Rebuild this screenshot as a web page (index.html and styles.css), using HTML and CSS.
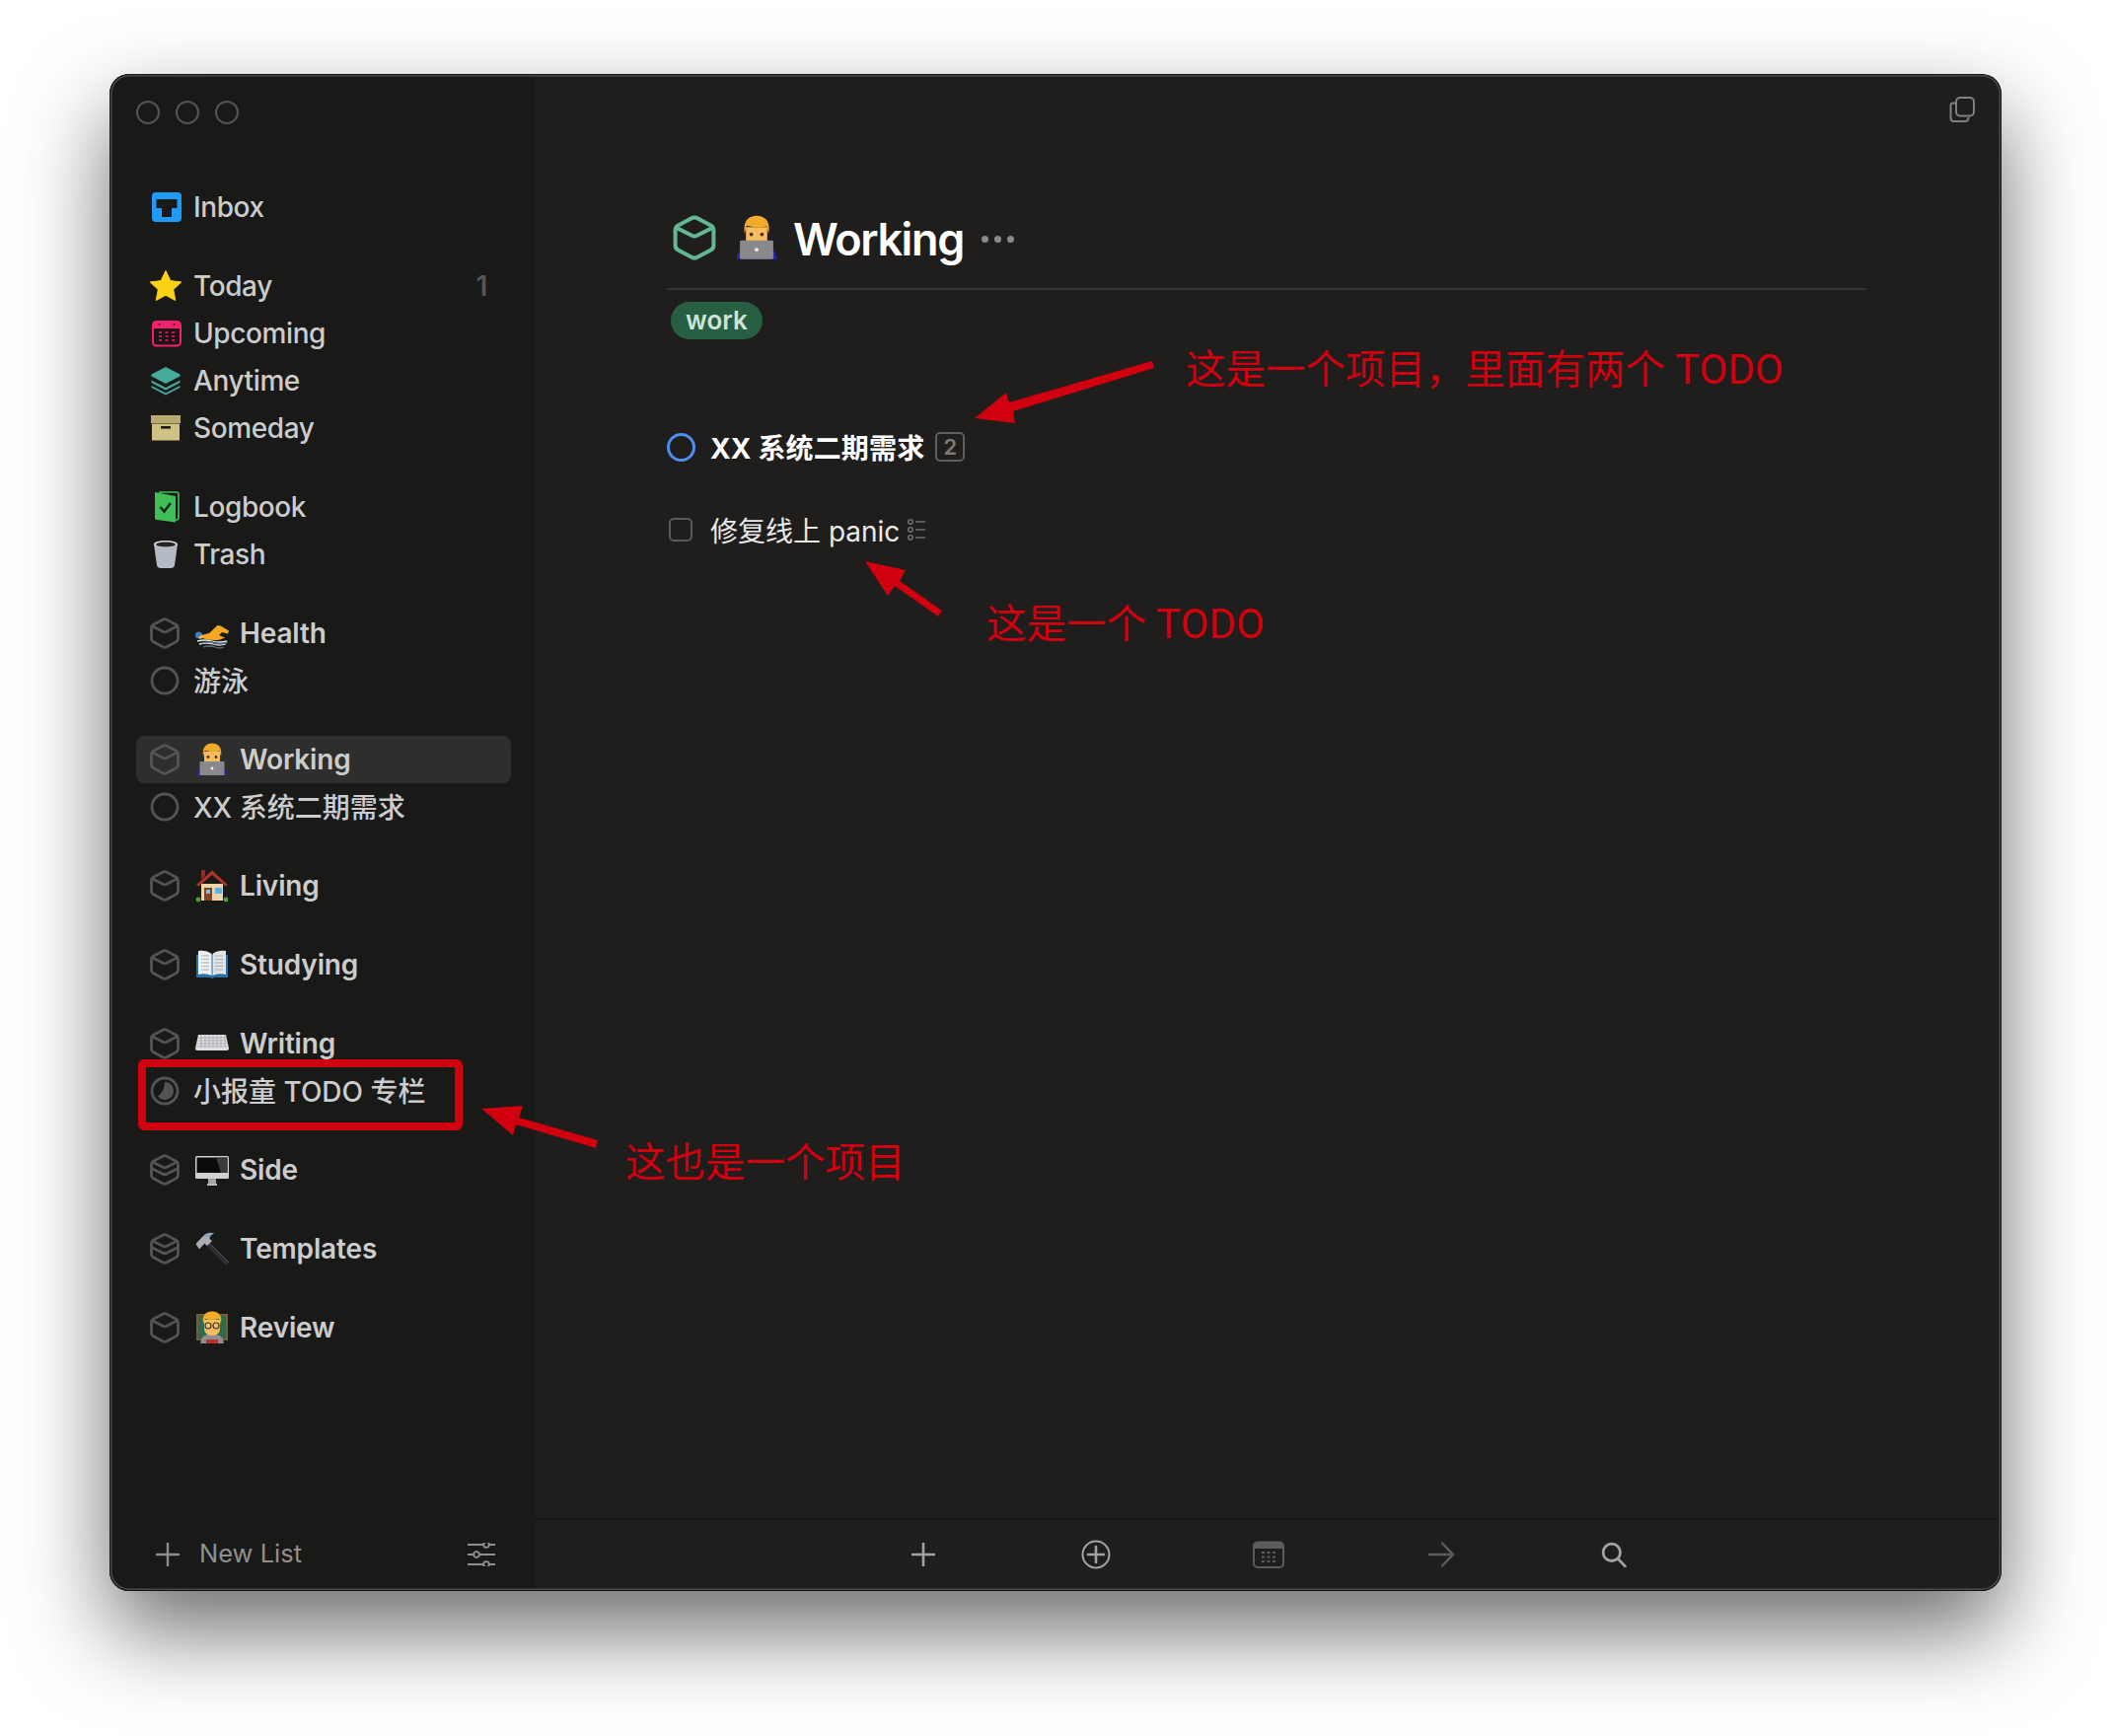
FILE: index.html
```html
<!DOCTYPE html>
<html lang="zh-CN">
<head>
    <meta charset="UTF-8">
    <title>Working</title>
    <link rel="stylesheet" href="styles.css">
</head>
<body>
    <!-- shared icons -->
    <svg class="sprites" aria-hidden="true">
        <defs>
            <symbol id="box" viewBox="0 0 30 32">
                <path d="M13 2.2 Q15 1.2 17 2.2 L26.5 7.3 Q28.5 8.4 28.5 10.5 V21.5 Q28.5 23.6 26.5 24.7 L17 29.8 Q15 30.8 13 29.8 L3.5 24.7 Q1.5 23.6 1.5 21.5 V10.5 Q1.5 8.4 3.5 7.3 Z M2.5 9 L13.5 14.6 Q15 15.3 16.5 14.6 L27.5 9" fill="none" stroke="currentColor" stroke-width="2.8"/>
            </symbol>
            <symbol id="box-stack" viewBox="0 0 30 32">
                <path d="M13 2.2 Q15 1.2 17 2.2 L26.5 7.3 Q28.5 8.4 28.5 10.5 V21.5 Q28.5 23.6 26.5 24.7 L17 29.8 Q15 30.8 13 29.8 L3.5 24.7 Q1.5 23.6 1.5 21.5 V10.5 Q1.5 8.4 3.5 7.3 Z M2.5 8 L13.5 13.4 Q15 14.1 16.5 13.4 L27.5 8 M2.5 15 L13.5 20.4 Q15 21.1 16.5 20.4 L27.5 15" fill="none" stroke="currentColor" stroke-width="2.8"/>
            </symbol>
            <symbol id="emoji-dev" viewBox="0 0 34 34">
                <path d="M2 33 Q3 25 9 23 H25 Q31 25 32 33 Z" fill="#2426b4"/>
                <path d="M9 9 H25 V19 Q25 25 17 25 Q9 25 9 19 Z" fill="#f8bd5e"/>
                <path d="M8 14 Q6 1 17 0.5 Q28 1 26 14 L24.5 8.5 Q17 10 9.5 8 Z" fill="#f2ab2a"/>
                <circle cx="13" cy="14.5" r="1.4" fill="#4a2f1b"/>
                <circle cx="21" cy="14.5" r="1.4" fill="#4a2f1b"/>
                <rect x="4.5" y="19" width="25" height="14" rx="1" fill="#88898d"/>
                <circle cx="17" cy="26" r="1.4" fill="#f2f2f2"/>
            </symbol>
            <symbol id="emoji-swim" viewBox="0 0 34 34">
                <path d="M2 25 Q10 23 17 25 T32 25 M4 28 Q12 26 18 28 T31 28" fill="none" stroke="#dfe8ec" stroke-width="1.3"/>
                <path d="M6 27 Q14 25 20 27 T33 26 M8 31 Q15 29 20 31 T29 31" fill="none" stroke="#5f7784" stroke-width="1.3"/>
                <path d="M6 19 L14 17 L22.5 9 L25.5 9.5 L34 14.5 L33 17.5 L27 16 L24 19 L30 21.5 L25 23.5 Q14 25 7 22 Z" fill="#f5a623"/>
                <circle cx="3.5" cy="19" r="3.5" fill="#3f7fc4"/>
                <path d="M3 21 L7 18.5 L8 21 L5 23 Z" fill="#f2c14a"/>
            </symbol>
            <symbol id="emoji-house" viewBox="0 0 34 34">
                <path d="M6 15 H28 V32 H6 Z" fill="#ecd5a8"/>
                <path d="M17 1.5 L33 16 L30.5 17.5 L17 6 L3.5 17.5 L1 16 Z" fill="#b3322a"/>
                <path d="M6 1 H10 V7 L6 10.5 Z" fill="#8f2a25"/>
                <rect x="9" y="19" width="8" height="13" fill="#7d4526"/>
                <rect x="11" y="21" width="4" height="4" fill="#7fc0e6"/>
                <rect x="20" y="19" width="7" height="6" fill="#6aaede"/>
                <circle cx="3" cy="31" r="2.4" fill="#5a9c3c"/>
                <circle cx="31" cy="31" r="2.4" fill="#5a9c3c"/>
            </symbol>
            <symbol id="emoji-book" viewBox="0 0 34 34">
                <path d="M1 7 H33 V30 H19 L17 31.5 L15 30 H1 Z" fill="#2b6fa8"/>
                <path d="M3 3 Q11 2 16.5 6 V28 Q10 25 3 27 Z" fill="#eef1f3"/>
                <path d="M31 3 Q23 2 17.5 6 V28 Q24 25 31 27 Z" fill="#dfe3e7"/>
                <path d="M6 8 H14 M6 11.5 H14 M6 15 H14 M6 18.5 H14 M6 22 H14 M20 8 H28 M20 11.5 H28 M20 15 H28 M20 18.5 H28 M20 22 H28" stroke="#a8b0ba" stroke-width="1"/>
            </symbol>
            <symbol id="emoji-keyboard" viewBox="0 0 34 34">
                <path d="M3 8 H31 L34 22 Q34 24 32 24 H2 Q0 24 0 22 Z" fill="#dfe0e3"/>
                <path d="M3 11 H31 M2.5 14 H31.5 M2 17 H32 M1.5 20 H32.5 M6 8 V21 M10 8 V21 M14 8 V21 M18 8 V21 M22 8 V21 M26 8 V21 M30 8 V21" stroke="#a4a5aa" stroke-width=".8"/>
            </symbol>
            <symbol id="emoji-monitor" viewBox="0 0 34 34">
                <rect x="0" y="3" width="34" height="23" rx="1.5" fill="#cfd0d2"/>
                <rect x="1.5" y="4.5" width="31" height="15.5" fill="#0b0b0c"/>
                <path d="M21 4.5 H32.5 V20 H26 Z" fill="#3b3b3e"/>
                <path d="M13 26 H21 V31 H13 Z" fill="#9fa0a3"/>
                <rect x="12" y="31" width="10" height="2" fill="#b8b9bb"/>
            </symbol>
            <symbol id="emoji-hammer" viewBox="0 0 34 34">
                <path d="M12 9 L34 31 L31 34 L9 12 Z" fill="#2a2d31"/>
                <path d="M12 9 L34 31" stroke="#4c5157" stroke-width="1"/>
                <path d="M0.5 12 L9 3 Q14 -0.5 19 1.5 Q14.5 3 14.5 7 L17 9 L12 14 L9.5 11.5 L4 17.5 Z" fill="#a9aeb4"/>
                <path d="M8 4.5 Q13 0.5 19 1.5 Q14.5 3 14 5.5 Z" fill="#7fa6c4"/>
            </symbol>
            <symbol id="emoji-teacher" viewBox="0 0 34 34">
                <rect x="1" y="3" width="32" height="27" fill="#7a5b3c"/>
                <rect x="3" y="5" width="28" height="23" fill="#2f6a4c"/>
                <path d="M5 33 Q6 25 12 24 H22 Q28 25 29 33 Z" fill="#8d8e92"/>
                <rect x="11" y="29" width="12" height="4" fill="#b7312d"/>
                <path d="M9 9 H25 V17 Q25 25 17 25 Q9 25 9 17 Z" fill="#f8bd5e"/>
                <path d="M8 13 Q6 1 17 0.5 Q28 1 26 13 L24 8 Q17 10 10 8 Z" fill="#f2ab2a"/>
                <circle cx="13" cy="15" r="3" fill="none" stroke="#3a3a3a" stroke-width="1.2"/>
                <circle cx="21" cy="15" r="3" fill="none" stroke="#3a3a3a" stroke-width="1.2"/>
            </symbol>
        </defs>
    </svg>

    <div class="stage">
        <div class="window">
            <aside class="sidebar">
                <div class="lights">
                    <span class="light"></span>
                    <span class="light"></span>
                    <span class="light"></span>
                </div>

                <nav class="lists">
                    <div class="group">
                        <a class="row">
                            <svg class="row-icon" viewBox="0 0 32 32"><rect x="2" y="1" width="30" height="30" rx="4" fill="#1e9bf7"/><path d="M6.5 8 H27.5 V17 H22 V26 H12 V17 H6.5 Z" fill="#191918"/></svg>
                            <span>Inbox</span>
                        </a>
                    </div>

                    <div class="group">
                        <a class="row">
                            <svg class="row-icon" viewBox="0 0 32 32"><path d="M16 0.5 L20.8 10.6 L31.8 12 L23.7 19.6 L25.8 30.6 L16 25.3 L6.2 30.6 L8.3 19.6 L0.2 12 L11.2 10.6 Z" fill="#fdd116" stroke="#fdd116" stroke-linejoin="round"/></svg>
                            <span>Today</span>
                            <b class="count">1</b>
                        </a>
                        <a class="row">
                            <svg class="row-icon" viewBox="0 0 32 32"><rect x="3" y="4" width="28" height="24.5" rx="3.5" fill="#1d1416" stroke="#f7206d" stroke-width="2"/><path d="M3 7 Q3 4 6 4 H28 Q31 4 31 7 V11 H3 Z" fill="#f7206d"/><path d="M9 15 H12 M15.5 15 H18.5 M22 15 H25 M9 19 H12 M15.5 19 H18.5 M22 19 H25 M9 23 H12 M15.5 23 H18.5 M22 23 H25" stroke="#c2185b" stroke-width="2"/><circle cx="9.5" cy="7" r="1" fill="#3d1020"/><circle cx="24.5" cy="7" r="1" fill="#3d1020"/></svg>
                            <span>Upcoming</span>
                        </a>
                        <a class="row">
                            <svg class="row-icon" viewBox="0 0 32 32"><path d="M16 2 L30.5 9.5 Q31 10.5 30.5 11.5 L16 19 L1.5 11.5 Q1 10.5 1.5 9.5 Z" fill="#46ab9c"/><path d="M1.5 15.5 L16 23 L30.5 15.5 V18 L16 25.5 L1.5 18 Z M1.5 21 L16 28.5 L30.5 21 V23 L16 30.5 L1.5 23 Z" fill="#46ab9c"/></svg>
                            <span>Anytime</span>
                        </a>
                        <a class="row">
                            <svg class="row-icon" viewBox="0 0 32 32"><rect x="1" y="3" width="30" height="8" fill="#b7ac70"/><rect x="2" y="11.5" width="28" height="17" fill="#cec183"/><rect x="11" y="14" width="10" height="2.6" fill="#1d1b14"/></svg>
                            <span>Someday</span>
                        </a>
                    </div>

                    <div class="group">
                        <a class="row">
                            <svg class="row-icon" viewBox="0 0 32 32"><path d="M9 1 H27 Q29 1 29 3 V27 Q29 29 27 29 H25" fill="none" stroke="#3fbf55" stroke-width="1.6"/><path d="M5 1 L26 5 V31.5 L7 29 Q5 29 5 27 Z" fill="#3fbf55"/><path d="M10.5 16 L14.5 20.5 L21 12" fill="none" stroke="#13261a" stroke-width="2.4"/></svg>
                            <span>Logbook</span>
                        </a>
                        <a class="row">
                            <svg class="row-icon" viewBox="0 0 32 32"><path d="M4 6 H28 L25 27 Q24.5 30 21 30 H11 Q7.5 30 7 27 Z" fill="#b4bac4"/><ellipse cx="16" cy="5.5" rx="12" ry="3.5" fill="#d8dbe0"/><ellipse cx="16" cy="6" rx="10" ry="2.5" fill="#232323"/></svg>
                            <span>Trash</span>
                        </a>
                    </div>

                    <div class="group">
                        <a class="row project">
                            <svg class="row-icon box"><use href="#box"/></svg>
                            <svg class="emoji"><use href="#emoji-swim"/></svg>
                            <span>Health</span>
                        </a>
                        <a class="row cjk">
                            <svg class="row-icon ring" viewBox="0 0 32 32"><circle cx="16" cy="16" r="13" fill="none" stroke="currentColor" stroke-width="2.8"/></svg>
                            <span>游泳</span>
                        </a>
                    </div>

                    <div class="group">
                        <a class="row project selected">
                            <svg class="row-icon box"><use href="#box"/></svg>
                            <svg class="emoji"><use href="#emoji-dev"/></svg>
                            <span>Working</span>
                        </a>
                        <a class="row cjk">
                            <svg class="row-icon ring" viewBox="0 0 32 32"><circle cx="16" cy="16" r="13" fill="none" stroke="currentColor" stroke-width="2.8"/></svg>
                            <span>XX 系统二期需求</span>
                        </a>
                    </div>

                    <div class="group">
                        <a class="row project">
                            <svg class="row-icon box"><use href="#box"/></svg>
                            <svg class="emoji"><use href="#emoji-house"/></svg>
                            <span>Living</span>
                        </a>
                    </div>

                    <div class="group">
                        <a class="row project">
                            <svg class="row-icon box"><use href="#box"/></svg>
                            <svg class="emoji"><use href="#emoji-book"/></svg>
                            <span>Studying</span>
                        </a>
                    </div>

                    <div class="group">
                        <a class="row project">
                            <svg class="row-icon box"><use href="#box"/></svg>
                            <svg class="emoji"><use href="#emoji-keyboard"/></svg>
                            <span>Writing</span>
                        </a>
                        <a class="row cjk">
                            <svg class="row-icon ring" viewBox="0 0 32 32"><circle cx="16" cy="16" r="13" fill="none" stroke="currentColor" stroke-width="2.8"/><path d="M16 7 A9 9 0 1 1 9 21.6 Q16 16 16 7 Z" fill="currentColor"/></svg>
                            <span>小报童 TODO 专栏</span>
                        </a>
                    </div>

                    <div class="group">
                        <a class="row project">
                            <svg class="row-icon box"><use href="#box-stack"/></svg>
                            <svg class="emoji"><use href="#emoji-monitor"/></svg>
                            <span>Side</span>
                        </a>
                    </div>

                    <div class="group">
                        <a class="row project">
                            <svg class="row-icon box"><use href="#box-stack"/></svg>
                            <svg class="emoji"><use href="#emoji-hammer"/></svg>
                            <span>Templates</span>
                        </a>
                    </div>

                    <div class="group">
                        <a class="row project">
                            <svg class="row-icon box"><use href="#box"/></svg>
                            <svg class="emoji"><use href="#emoji-teacher"/></svg>
                            <span>Review</span>
                        </a>
                    </div>
                </nav>

                <div class="side-footer">
                    <svg class="new-plus" viewBox="0 0 24 24"><path d="M12 1 V23 M1 12 H23" stroke="currentColor" stroke-width="2.4" stroke-linecap="round"/></svg>
                    <span class="new-list">New List</span>
                    <svg class="sliders" viewBox="0 0 28 24" fill="none" stroke="currentColor" stroke-width="1.8"><path d="M0 2 H16 M22 2 H28 M0 12 H6 M12 12 H28 M0 22 H16 M22 22 H28"/><circle cx="19" cy="2" r="2.8"/><circle cx="9" cy="12" r="2.8"/><circle cx="19" cy="22" r="2.8"/></svg>
                </div>
            </aside>

            <main class="main">
                <div class="topbar">
                    <svg class="copy-icon" viewBox="0 0 26 26" fill="none" stroke="currentColor" stroke-width="2"><path d="M6 6.5 H4 Q1.5 6.5 1.5 9 V21.5 Q1.5 25 5 25 H16 Q19.5 25 19.5 21"/><rect x="7" y="1" width="18" height="18.5" rx="4"/></svg>
                </div>

                <div class="content">
                    <div class="title-row">
                        <svg class="title-box"><use href="#box"/></svg>
                        <svg class="title-emoji"><use href="#emoji-dev"/></svg>
                        <h1>Working</h1>
                        <div class="dots"><i></i><i></i><i></i></div>
                    </div>

                    <span class="tag">work</span>

                    <div class="task-row subproject">
                        <span class="task-mark"><span class="blue-ring"></span></span>
                        <span>XX 系统二期需求</span>
                        <span class="task-count">2</span>
                    </div>

                    <div class="task-row todo">
                        <span class="task-mark"><span class="checkbox"></span></span>
                        <span>修复线上 panic</span>
                        <svg class="checklist" viewBox="0 0 18 24" fill="none" stroke="currentColor" stroke-width="1.6"><circle cx="3" cy="4" r="2.2"/><circle cx="3" cy="12" r="2.2"/><circle cx="3" cy="20" r="2.2"/><path d="M8 4 H18 M8 12 H18 M8 20 H18"/></svg>
                    </div>
                </div>

                <div class="toolbar">
                    <div class="tool"><svg class="tool-plus" viewBox="0 0 24 24"><path d="M12 1 V23 M1 12 H23" stroke="currentColor" stroke-width="2.6" stroke-linecap="round"/></svg></div>
                    <div class="tool"><svg class="tool-add" viewBox="0 0 30 30" fill="none" stroke="currentColor" stroke-width="2"><circle cx="15" cy="15" r="13.5"/><path d="M15 7 V23 M7 15 H23" stroke-width="2.6" stroke-linecap="round"/></svg></div>
                    <div class="tool dim"><svg class="tool-cal" viewBox="0 0 32 28"><rect x="1" y="1.5" width="30" height="25.5" rx="4" fill="none" stroke="currentColor" stroke-width="2"/><path d="M1 5 Q1 1.5 5 1.5 H27 Q31 1.5 31 5 V8 H1 Z" fill="currentColor"/><path d="M9 12 H12 M14.5 12 H17.5 M20 12 H23 M9 16.5 H12 M14.5 16.5 H17.5 M20 16.5 H23 M9 21 H12 M14.5 21 H17.5 M20 21 H23" stroke="currentColor" stroke-width="2"/></svg></div>
                    <div class="tool dim"><svg class="tool-arrow" viewBox="0 0 26 26" fill="none" stroke="currentColor" stroke-width="2.4" stroke-linecap="round"><path d="M1 13 H25 M14 1.5 L25 13 L14 24.5"/></svg></div>
                    <div class="tool"><svg class="tool-search" viewBox="0 0 24 24" fill="none" stroke="currentColor" stroke-width="2.6" stroke-linecap="round"><circle cx="10" cy="10" r="8"/><path d="M16 16 L22.5 23"/></svg></div>
                </div>
            </main>
        </div>

        <!-- red annotations drawn on top of the screenshot -->
        <svg class="marks" viewBox="0 0 2140 1760">
            <rect x="144" y="1078" width="321" height="64" rx="2" fill="none" stroke="#d0000f" stroke-width="8"/>
            <polygon points="988,424 1020,398 1023,408 1168,366 1170,373 1027,417 1029,429" fill="#d0000f"/>
            <polygon points="877,569 918,578 912,589 955,619 951,625 907,594 900,604" fill="#d0000f"/>
            <polygon points="488,1124 530,1121 526,1133 606,1156 604,1164 523,1140 520,1151" fill="#d0000f"/>
        </svg>
        <div class="note note-project">这是一个项目，里面有两个 <span class="latin">TODO</span></div>
        <div class="note note-todo">这是一个 <span class="latin">TODO</span></div>
        <div class="note note-list">这也是一个项目</div>
    </div>
</body>
</html>
```

FILE: styles.css
```css
* {
    box-sizing: border-box;
}
html, body {
    margin: 0;
    background: #fff;
}
.sprites {
    position: absolute;
    width: 0;
    height: 0;
}
.stage {
    position: relative;
    width: 2140px;
    height: 1760px;
    padding: 75px 0 0 111px;
    overflow: hidden;
    font-family: Inter, "Noto Sans CJK SC", sans-serif;
}
.window {
    position: relative;
    display: flex;
    width: 1918px;
    height: 1538px;
    border-radius: 20px;
    overflow: hidden;
    background: #1f1e1d;
    box-shadow: 0 40px 90px rgba(0, 0, 0, .58);
}
/* edge of the window, sits over both panes */
.window::after {
    content: "";
    position: absolute;
    inset: 0;
    border-radius: 20px;
    box-shadow: inset 0 0 0 1px #111, inset 0 0 0 2.5px #4a4a4a;
    pointer-events: none;
}

/* sidebar */
.sidebar {
    display: flex;
    flex-direction: column;
    width: 432px;
    background: #191918;
}
.lights {
    display: flex;
    gap: 16px;
    padding: 27px 0 0 27px;
}
.light {
    width: 24px;
    height: 24px;
    border: 2px solid #525252;
    border-radius: 50%;
}
.lists {
    flex: 1;
    margin-top: 60px;
    padding: 0 25px 0 27px;
}
.group {
    margin-bottom: 32px;
}
.row {
    display: flex;
    align-items: center;
    height: 48px;
    padding-left: 14px;
    border-radius: 8px;
    color: #cccccc;
    font-size: 28px;
    font-weight: 500;
    letter-spacing: -.4px;
    white-space: nowrap;
}
.row.project {
    font-weight: 600;
    letter-spacing: -.15px;
}
.row.cjk {
    letter-spacing: 0;
}
.row.cjk span {
    padding-bottom: 2px;
}
.row.selected {
    background: #2e2e2d;
}
.row-icon {
    flex: none;
    width: 32px;
    height: 32px;
    margin-right: 12px;
}
.box, .ring {
    margin-left: -1px;
    margin-right: 13px;
    color: #545454;
}
.emoji {
    flex: none;
    width: 34px;
    height: 34px;
    margin: 0 11px 0 2px;
}
.count {
    margin-left: auto;
    margin-right: 24px;
    color: #555;
    font-weight: 600;
}
.side-footer {
    display: flex;
    align-items: center;
    height: 72px;
    margin-bottom: 1px;
    padding: 0 41px 0 47px;
    color: #8f8f8f;
}
.new-plus {
    width: 24px;
    height: 24px;
    margin-right: 20px;
}
.new-list {
    flex: 1;
    font-size: 25.5px;
    line-height: 30px;
    padding-bottom: 2px;
}
.sliders {
    width: 28px;
    height: 24px;
}

/* main */
.main {
    display: flex;
    flex: 1;
    flex-direction: column;
}
.topbar {
    display: flex;
    justify-content: flex-end;
    height: 75px;
    padding: 23px 27px 0 0;
    color: #808080;
}
.copy-icon {
    width: 26px;
    height: 26px;
}
.content {
    flex: 1;
    margin-top: 56px;
    padding: 0 137px 0 133px;
}
.title-row {
    display: flex;
    align-items: center;
    height: 88px;
    padding-bottom: 16px;
    border-bottom: 2px solid #353535;
    color: #fff;
}
.title-box {
    width: 44px;
    height: 46px;
    margin-left: 6px;
    color: #62b795;
}
.title-emoji {
    width: 46px;
    height: 46px;
    margin-left: 18px;
}
h1 {
    margin: 2px 0 0 14px;
    font-size: 45px;
    font-weight: 600;
    letter-spacing: -1.4px;
}
.dots {
    display: flex;
    gap: 6px;
    margin: 2px 0 0 18px;
}
.dots i {
    width: 7px;
    height: 7px;
    border-radius: 50%;
    background: #8a8a8a;
}
.tag {
    display: block;
    width: 93px;
    height: 38px;
    margin: 12px 0 0 4px;
    border-radius: 19px;
    background: #265f42;
    color: #cfe3d7;
    font-size: 26px;
    font-weight: 600;
    line-height: 38px;
    text-align: center;
}
.task-row {
    display: flex;
    align-items: center;
    height: 48px;
    font-size: 28px;
    white-space: nowrap;
}
.subproject {
    margin-top: 85px;
    color: #fff;
    font-weight: 700;
    letter-spacing: .15px;
}
.todo {
    margin-top: 36px;
    color: #eaeaea;
}
.task-mark {
    display: flex;
    flex: none;
    width: 44px;
}
.blue-ring {
    width: 29px;
    height: 29px;
    border: 3px solid #4d8ff0;
    border-radius: 50%;
}
.checkbox {
    width: 24px;
    height: 24px;
    margin-left: 2px;
    border: 2.5px solid #5a5a5a;
    border-radius: 5px;
}
.task-count {
    width: 30px;
    height: 30px;
    margin-left: 11px;
    border: 2px solid #5f5f5f;
    border-radius: 5px;
    color: #7a7a7a;
    font-size: 22px;
    font-weight: 600;
    line-height: 26px;
    text-align: center;
}
.checklist {
    width: 18px;
    height: 24px;
    margin-left: 8px;
    color: #6d6d6d;
}
.toolbar {
    display: flex;
    justify-content: center;
    align-items: center;
    height: 74px;
    padding-bottom: 2px;
    border-top: 2px solid #181818;
    color: #a2a2a2;
}
.tool {
    display: flex;
    justify-content: center;
    width: 175px;
}
.tool.dim {
    color: #5c5c5c;
}
.tool-plus {
    width: 24px;
    height: 24px;
}
.tool-add {
    width: 30px;
    height: 30px;
}
.tool-cal {
    width: 32px;
    height: 28px;
}
.tool-arrow, .tool-search {
    width: 26px;
    height: 26px;
}

/* annotations */
.marks {
    position: absolute;
    left: 0;
    top: 0;
    width: 2140px;
    height: 1760px;
}
.note {
    position: absolute;
    color: #d0000f;
    font-family: Roboto, "Noto Sans CJK SC", sans-serif;
    font-size: 40.5px;
    line-height: 50px;
    white-space: nowrap;
}
.latin {
    font-size: 42px;
}
.note-project {
    left: 1202px;
    top: 350px;
}
.note-todo {
    left: 1000px;
    top: 608px;
}
.note-list {
    left: 634px;
    top: 1154px;
}
```
